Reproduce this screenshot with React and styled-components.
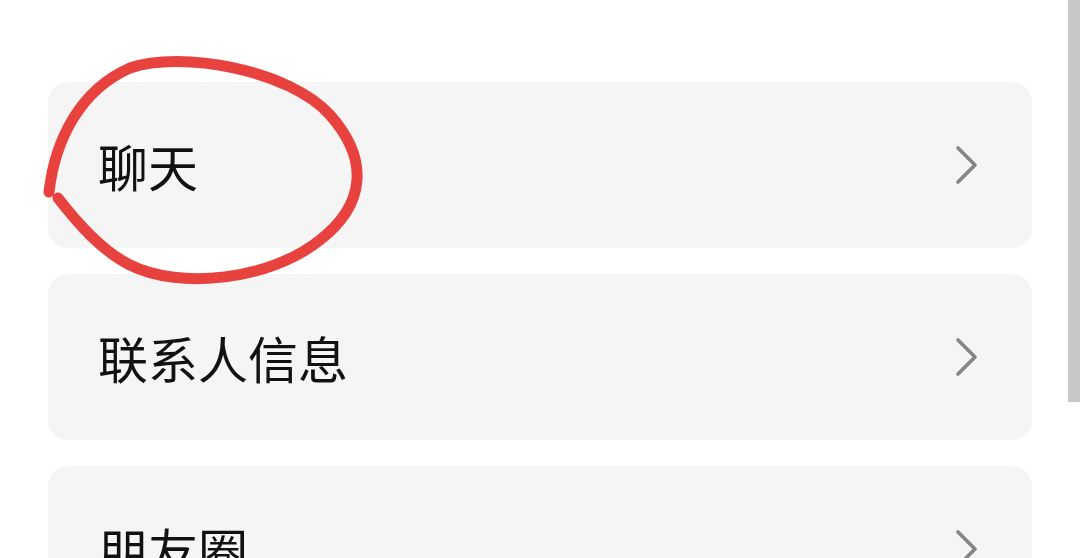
import React from "react";
import styled, { createGlobalStyle } from "styled-components";

const Global = createGlobalStyle`
  html, body { margin: 0; padding: 0; background: #ffffff; }
  body { width: 1080px; height: 558px; overflow: hidden; font-family: "Noto Sans CJK SC", "Noto Sans", sans-serif; }
`;

const Page = styled.div`
  position: relative;
  width: 1080px;
  height: 558px;
  overflow: hidden;
  background: #ffffff;
`;

const List = styled.div`
  display: flex;
  flex-direction: column;
  gap: 26px;
  padding: 82px 0 0 48px;
  width: 984px;
`;

const Card = styled.div`
  display: flex;
  align-items: center;
  justify-content: space-between;
  height: 166px;
  box-sizing: border-box;
  padding: 0 52px 0 50px;
  background: #f5f5f5;
  border-radius: 20px;
`;

const Label = styled.span`
  font-family: "Noto Sans CJK SC", "Noto Sans", sans-serif;
  font-size: 50px;
  line-height: 1;
  color: #111111;
  letter-spacing: 0;
`;

const Chevron = styled.svg`
  width: 26px;
  height: 40px;
  flex: none;
`;

const ScrollThumb = styled.div`
  position: absolute;
  top: 0;
  right: 0;
  width: 12px;
  height: 402px;
  background: #c8c8c8;
`;

const Annotation = styled.svg`
  position: absolute;
  left: 0;
  top: 0;
  width: 400px;
  height: 300px;
  pointer-events: none;
`;

const Arrow = () => (
  <Chevron viewBox="0 0 26 40">
    <polyline
      points="4,3 21,20 4,37"
      fill="none"
      stroke="#858585"
      strokeWidth="3.6"
      strokeLinecap="round"
      strokeLinejoin="round"
    />
  </Chevron>
);

const items = ["聊天", "联系人信息", "朋友圈"];

export default function App() {
  return (
    <Page>
      <Global />
      <List>
        {items.map((t) => (
          <Card key={t}>
            <Label>{t}</Label>
            <Arrow />
          </Card>
        ))}
      </List>
      <ScrollThumb />
      <Annotation viewBox="0 0 400 300">
        <path
          d="M 49 192 C 55 140, 80 90, 130 68 C 180 50, 290 70, 330 115 C 370 160, 365 205, 320 240 C 270 280, 180 290, 130 265 C 100 250, 75 220, 58 198"
          fill="none"
          stroke="#e8423f"
          strokeWidth="11"
          strokeLinecap="round"
          strokeLinejoin="round"
        />
      </Annotation>
    </Page>
  );
}
